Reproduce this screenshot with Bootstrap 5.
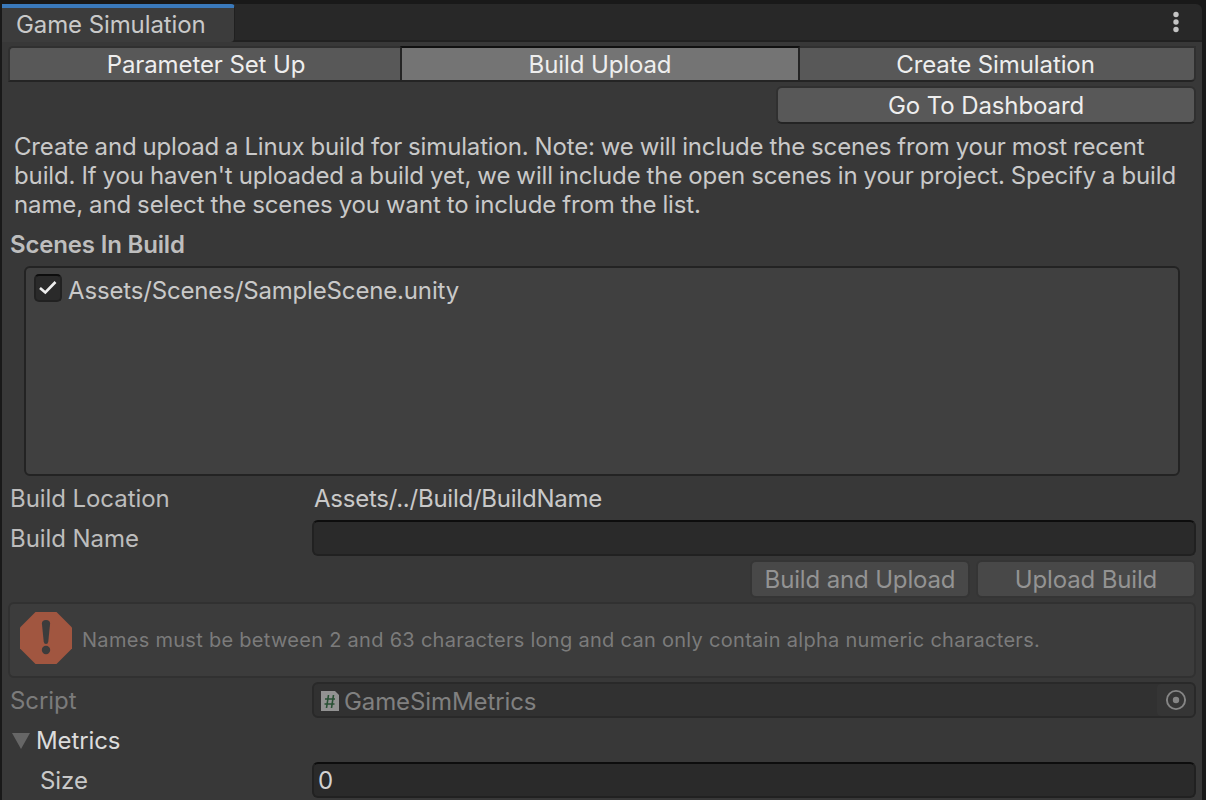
<!DOCTYPE html>
<html lang="en">
<head>
<meta charset="utf-8">
<meta name="viewport" content="width=device-width, initial-scale=1">
<title>Game Simulation</title>
<link href="https://cdn.jsdelivr.net/npm/bootstrap@5.3.0/dist/css/bootstrap.min.css" rel="stylesheet">
<style>
  body { height: 800px; overflow: hidden; background: #191919; color: #c9c9c9; font: 400 24px/38px Inter, sans-serif; letter-spacing: -.1px; }
  .editor { height: 800px; padding: 4px 4px 0 2px; }
  .titlebar { height: 38px; background: #282828; border-bottom: 2px solid #212121; border-radius: 0 6px 0 0; }
  .dock-tab { height: 38px; width: 233px; padding-left: 14px; background: #3c3c3c; border-top: 4px solid #3a79bb; border-right: 1px solid #202020; border-radius: 0 4px 4px 0; line-height: 33px; }
  .kebab { margin: 7px 21px 0 0; }
  .panel { height: 758px; background: #383838; padding: 4px 6px 0; }
  .ubtn { height: 38px; padding: 1px 0 0; border: 2px solid #303030; border-bottom-color: #242424; border-radius: 6px; background: #585858; color: #eee; font: inherit; letter-spacing: inherit; line-height: 33px; }
  .ubtn:disabled { opacity: 1; background: #484848; color: #939393; border-color: #353535; }
  .seg { height: 36px; margin-bottom: 4px; }
  .seg .ubtn { height: 36px; line-height: 31px; flex: none; }
  .seg .one { width: 392px; padding-left: 2px; border-right: 0; border-radius: 5px 0 0 0; }
  .seg .two { width: 400px; background: #747474; border-color: #101010 #242424 #242424; border-radius: 0; }
  .seg .three { width: 396px; padding-right: 3px; border-left: 0; border-radius: 0 0 5px 0; }
  .dash { width: 420px; }
  .half { width: 220px; letter-spacing: -.15px; }
  .about { margin: 8px 0 0; padding: 0 6px; line-height: 29px; height: 94px; letter-spacing: -.16px; word-spacing: -.55px; }
  .about-mid { letter-spacing: -.125px; }
  .heading { font-weight: 600; line-height: 38px; height: 40px; padding-left: 2px; letter-spacing: -.17px; color: #bebebe; }
  .scenes { margin: 0 16px 4px; height: 210px; border: 2px solid #232323; border-radius: 6px; background: #404040; padding: 6px 8px; }
  .tick { width: 28px; height: 28px; border: 2px solid #212121; border-top-color: #0d0d0d; border-radius: 5px; background: #2a2a2a; }
  .scene-name { margin-left: 6px; line-height: 34px; letter-spacing: -.16px; }
  .prop { height: 36px; margin-bottom: 4px; }
  .prop-label { width: 304px; flex: none; padding-left: 2px; color: #bdbdbd; letter-spacing: -.07px; }
  .location { margin-left: 2px; letter-spacing: -.24px; }
  .field { height: 36px; border: 2px solid #212121; border-top-color: #0d0d0d; border-radius: 6px; background: #2a2a2a; line-height: 34px; padding-left: 4px; color: #d2d2d2; }
  .field-off { background: #313131; border-color: #292929; color: #808080; }
  .obj-name { margin-left: 5px; padding-top: 3px; }
  .helpbox { height: 76px; margin: 4px 0; border: 2px solid #313131; border-radius: 6px; background: #3c3c3c; color: #7b7b7b; font-size: 20px; padding-left: 10px; letter-spacing: .29px; }
  .picker { width: 37px; height: 32px; background: #353535; border-radius: 4px; }
</style>
</head>
<body>
<main class="editor">
  <header class="titlebar d-flex justify-content-between align-items-start">
    <div class="dock-tab">Game Simulation</div>
    <svg class="kebab" width="10" height="22" fill="#c4c4c4"><circle cx="5" cy="3.5" r="2.7"/><circle cx="5" cy="11" r="2.7"/><circle cx="5" cy="18.5" r="2.7"/></svg>
  </header>
  <section class="panel">
    <div class="seg d-flex">
      <button class="btn ubtn one">Parameter Set Up</button>
      <button class="btn ubtn two">Build Upload</button>
      <button class="btn ubtn three">Create Simulation</button>
    </div>
    <div class="d-flex justify-content-end"><button class="btn ubtn dash">Go To Dashboard</button></div>
    <p class="about text-nowrap">Create and upload a Linux build for simulation. Note: we will include the scenes from your most recent<br><span class="about-mid">build. If you haven't uploaded a build yet, we will include the open scenes in your project. Specify a build<br>name, and select the scenes you want to include from the list.</span></p>
    <div class="heading">Scenes In Build</div>
    <div class="scenes">
      <div class="d-flex">
        <span class="tick"><svg class="d-block" width="24" height="24" fill="none" stroke="#eee" stroke-width="2.6"><path d="M4 12 9.300 16.500 19.500 6"/></svg></span>
        <span class="scene-name">Assets/Scenes/SampleScene.unity</span>
      </div>
    </div>
    <div class="prop d-flex"><span class="prop-label">Build Location</span><span class="location">Assets/../Build/BuildName</span></div>
    <div class="prop d-flex"><span class="prop-label">Build Name</span><div class="field flex-grow-1"></div></div>
    <div class="d-flex justify-content-end">
      <button class="btn ubtn half" disabled>Build and Upload</button>
      <button class="btn ubtn half" style="margin-left:6px" disabled>Upload Build</button>
    </div>
    <div class="helpbox d-flex align-items-center">
      <svg width="52" height="52" style="margin-top:-4px"><path fill="#a15640" d="M15.500 0h21L52 15.500v21L36.500 52h-21L0 36.500v-21z"/><path fill="#3c3c3c" d="M21.900 11.500q0-3.600 4.100-3.600t4.100 3.600L28.300 29.500q-.3 2.500-2.300 2.500t-2.300-2.500z"/><circle cx="26" cy="38" r="4.200" fill="#3c3c3c"/></svg>
      <span style="margin-left:10px">Names must be between 2 and 63 characters long and can only contain alpha numeric characters.</span>
    </div>
    <div class="prop d-flex"><span class="prop-label" style="color:#7b7b7b">Script</span>
      <div class="field field-off flex-grow-1 d-flex align-items-center">
        <svg style="margin:2px 0 0 3px" width="18" height="20"><path fill="#929292" d="M0 0h14l4 4v16H0z"/><path d="M7.500 4 5.500 17M12.500 4l-2 13M4 8h10M3.500 13h10" stroke="#285034" stroke-width="1.600"/></svg>
        <span class="obj-name">GameSimMetrics</span>
        <span class="picker ms-auto d-flex align-items-center justify-content-center"><svg width="22" height="22"><circle cx="11" cy="11" r="9.100" fill="none" stroke="#858585" stroke-width="1.900"/><circle cx="11" cy="11" r="3.200" fill="#858585"/></svg></span>
      </div>
    </div>
    <div class="prop d-flex" style="color:#dcdcdc"><svg style="margin:11px 0 0 4px" width="18" height="16"><path fill="#666" d="M0 0h18L9 16z"/></svg><span style="margin-left:6px">Metrics</span></div>
    <div class="prop d-flex"><span class="prop-label" style="padding-left:32px;color:#c8c8c8">Size</span><div class="field flex-grow-1">0</div></div>
  </section>
</main>
<script src="https://cdn.jsdelivr.net/npm/bootstrap@5.3.0/dist/js/bootstrap.bundle.min.js"></script>
</body>
</html>
